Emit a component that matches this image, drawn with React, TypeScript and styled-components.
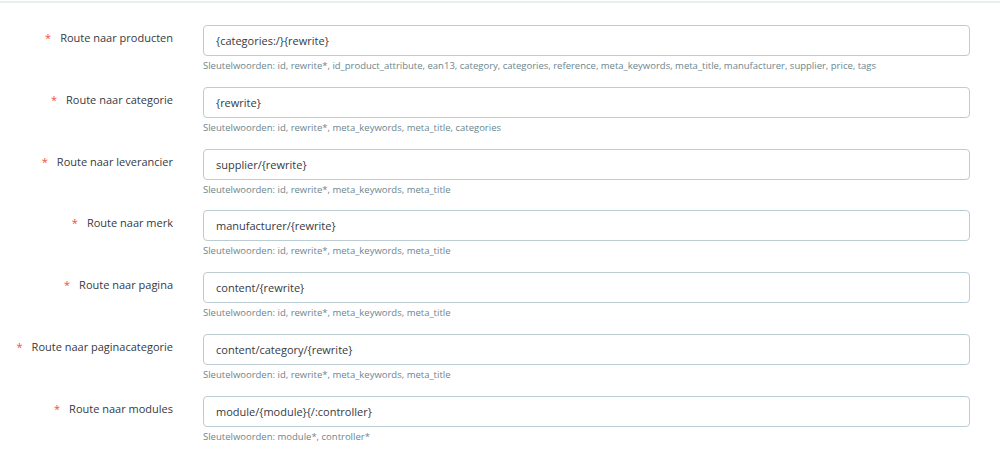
import { createGlobalStyle, styled } from "styled-components"

const GlobalStyle = createGlobalStyle`
    html, body {
        margin: 0;
        padding: 0;
        background: #fff;
    }
    body {
        font-family: "Open Sans", "Liberation Sans", sans-serif;
    }
`

const Panel = styled.div`
    margin-top: 1px;
    border-top: 2px solid #e9eef0;
    padding-top: 22px;
    width: 1000px;
`

const Row = styled.div`
    display: grid;
    grid-template-columns: 173px 767px;
    column-gap: 30px;
    margin-bottom: 14.8px;
`

const Label = styled.label`
    padding-top: 5px;
    text-align: right;
    font-size: 11px;
    color: #363a41;
    line-height: 16px;

    .required {
        color: #f54c3e;
        margin-right: 9px;
    }
`

const Input = styled.input`
    box-sizing: border-box;
    width: 100%;
    height: 31px;
    margin: 0;
    padding: 0 12px;
    border: 1px solid #bbcdd2;
    border-radius: 4px;
    background: #fff;
    font-family: "Open Sans", "Liberation Sans", sans-serif;
    font-size: 11px;
    color: #363a41;
    outline: none;
`

const Help = styled.p`
    margin: 4px 0 0;
    font-size: 9.5px;
    line-height: 12px;
    color: #6c868e;
`

const routes = [
    {
        label: "Route naar producten",
        value: "{categories:/}{rewrite}",
        help: "id, rewrite*, id_product_attribute, ean13, category, categories, reference, meta_keywords, meta_title, manufacturer, supplier, price, tags",
    },
    {
        label: "Route naar categorie",
        value: "{rewrite}",
        help: "id, rewrite*, meta_keywords, meta_title, categories",
    },
    {
        label: "Route naar leverancier",
        value: "supplier/{rewrite}",
        help: "id, rewrite*, meta_keywords, meta_title",
    },
    {
        label: "Route naar merk",
        value: "manufacturer/{rewrite}",
        help: "id, rewrite*, meta_keywords, meta_title",
    },
    {
        label: "Route naar pagina",
        value: "content/{rewrite}",
        help: "id, rewrite*, meta_keywords, meta_title",
    },
    {
        label: "Route naar paginacategorie",
        value: "content/category/{rewrite}",
        help: "id, rewrite*, meta_keywords, meta_title",
    },
    {
        label: "Route naar modules",
        value: "module/{module}{/:controller}",
        help: "module*, controller*",
    },
]

export default () => {
    return (
        <>
            <GlobalStyle />
            <Panel>
                {routes.map((r) => (
                    <Row key={r.label}>
                        <Label>
                            <span className="required">*</span>
                            {r.label}
                        </Label>
                        <div>
                            <Input defaultValue={r.value} />
                            <Help>Sleutelwoorden: {r.help}</Help>
                        </div>
                    </Row>
                ))}
            </Panel>
        </>
    )
}
